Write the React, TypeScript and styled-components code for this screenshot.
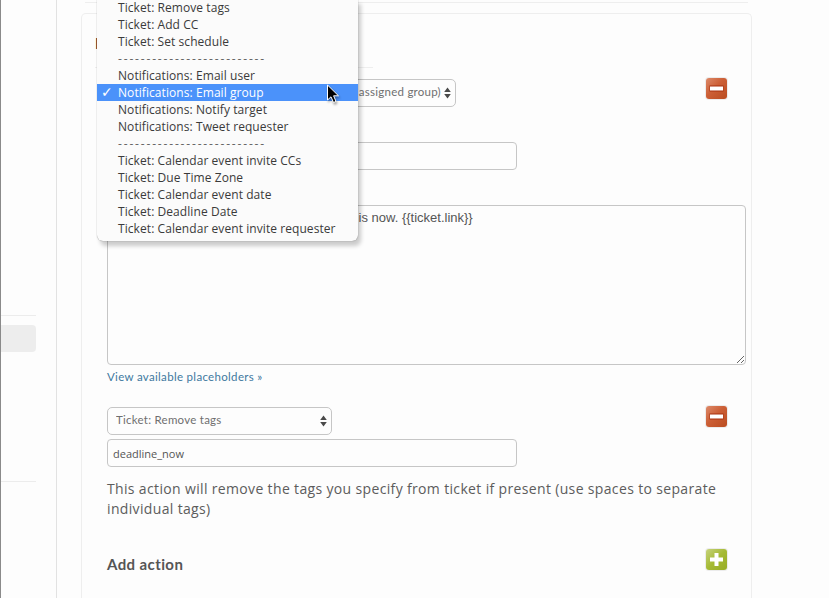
import React from 'react';
import styled, { createGlobalStyle } from 'styled-components';

const GlobalStyle = createGlobalStyle`
    html, body {
        margin: 0;
        padding: 0;
        background: #fdfdfd;
    }
`;

const Page = styled.div`
    position: relative;
    display: flex;
    width: 829px;
    height: 598px;
    overflow: hidden;
    background: #fdfdfd;
    font-family: "Lato", "Liberation Sans", sans-serif;
    color: #555;
`;

const Sidebar = styled.aside`
    box-sizing: border-box;
    flex: 0 0 57px;
    padding-top: 315px;
    border-left: 1px solid #8a8a8a;
    border-right: 1px solid #e2e2e2;
`;

const SideRule = styled.div`
    width: 35px;
    height: 1px;
    background: #ececec;
`;

const SideItem = styled.div`
    width: 35px;
    height: 27px;
    margin: 9px 0 129px;
    border-radius: 0 4px 4px 0;
    background: #ededed;
`;

const Main = styled.main`
    flex: 1;
    padding: 2px 0 0 24px;
`;

const TopRule = styled.div`
    width: 663px;
    height: 1px;
    margin-left: 4px;
    background: #eeeeee;
`;

const Panel = styled.section`
    box-sizing: border-box;
    width: 671px;
    height: 600px;
    margin-top: 10px;
    padding: 0 0 0 13px;
    border: 1px solid #eeeeee;
    border-bottom: 0;
    border-radius: 5px 5px 0 0;
`;

const SectionTitle = styled.h3`
    box-sizing: border-box;
    width: 278px;
    height: 54px;
    margin: 0 0 11px;
    padding-top: 20px;
    border-bottom: 1px solid #eeeeee;
    font-size: 15px;
    line-height: 18px;
    font-weight: 700;
    color: #333;
`;

const Actions = styled.div`
    width: 639px;
    margin-left: 12px;
`;

const SelectRow = styled.div`
    display: flex;
    align-items: flex-start;
    justify-content: space-between;
    padding-right: 19px;
`;

const SelectWrap = styled.div<{ $width: number }>`
    position: relative;
    width: ${(p) => p.$width}px;
    height: 28px;
`;

const Select = styled.select`
    appearance: none;
    box-sizing: border-box;
    display: block;
    width: 100%;
    height: 28px;
    margin: 0;
    padding: 0 12px 4px 8px;
    border: 1px solid #c6c6c6;
    border-radius: 5px;
    background: #fdfdfd;
    font-family: "Lato", "Liberation Sans", sans-serif;
    font-size: 11.5px;
    letter-spacing: 0.25px;
    color: #6f6f6f;
`;

const Arrows = styled.svg`
    position: absolute;
    top: 8px;
    right: 5px;
    width: 7px;
    height: 12px;
`;

const TextInput = styled.input<{ $gap: number }>`
    box-sizing: border-box;
    display: block;
    width: 410px;
    height: 28px;
    margin: ${(p) => p.$gap}px 0 0;
    padding: 0 5px;
    border: 1px solid #c6c6c6;
    border-radius: 4px;
    background: #fdfdfd;
    font-family: "Open Sans", "Liberation Sans", sans-serif;
    font-size: 11px;
    color: #555;
    outline: none;
`;

const MessageBox = styled.textarea`
    box-sizing: border-box;
    display: block;
    width: 639px;
    height: 160px;
    margin: 35px 0 0;
    padding: 4px 7px;
    border: 1px solid #c6c6c6;
    border-radius: 4px;
    background: #fdfdfd;
    font-family: "Liberation Sans", sans-serif;
    font-size: 13px;
    line-height: 16px;
    color: #555;
    outline: none;
`;

const PlaceholderLink = styled.a`
    display: block;
    height: 42px;
    padding-top: 5px;
    box-sizing: border-box;
    font-size: 11.5px;
    line-height: 14px;
    letter-spacing: 0.32px;
    color: #41799f;
    text-decoration: none;
`;

const HelpText = styled.p`
    max-width: 625px;
    margin: 12px 0 0;
    font-family: "Open Sans", sans-serif;
    font-size: 14px;
    line-height: 20px;
    letter-spacing: 0.345px;
    color: #5c5c5c;
`;

const AddRow = styled.div`
    display: flex;
    align-items: flex-start;
    justify-content: space-between;
    margin-top: 31px;
    padding-right: 19px;
`;

const AddTitle = styled.span`
    padding-top: 5px;
    font-size: 15px;
    line-height: 18px;
    font-weight: 700;
    letter-spacing: 0.4px;
    color: #555;
`;

const SquareButton = styled.button<{ $tone: 'remove' | 'add' }>`
    display: flex;
    align-items: center;
    justify-content: center;
    width: 21px;
    height: 21px;
    margin-top: -1px;
    padding: 0;
    border: 0;
    border-radius: 3px;
    box-shadow: 0 0 0 1px #ececec;
    background: ${(p) =>
        p.$tone === 'remove'
            ? 'linear-gradient(135deg, #dd8a6a 0%, #cc5f36 45%, #ba4c20 100%)'
            : 'linear-gradient(135deg, #c6d27c 0%, #a5ba34 50%, #98ac26 100%)'};
`;

const ButtonGlyph = styled.svg`
    display: block;
    width: 15px;
    height: 15px;
`;

const Popup = styled.ul`
    position: absolute;
    top: -1px;
    left: 97px;
    box-sizing: border-box;
    width: 261px;
    height: 242px;
    margin: 0;
    padding: 0;
    list-style: none;
    border-radius: 0 0 6px 6px;
    background: #fbfbfb;
    box-shadow: 0 0 1px rgba(0, 0, 0, 0.5), 3px 5px 4px rgba(0, 0, 0, 0.2);
`;

const PopupItem = styled.li<{ $selected?: boolean; $separator?: boolean }>`
    position: relative;
    height: 17px;
    padding-left: 21px;
    font-family: "Open Sans", "Liberation Sans", sans-serif;
    font-size: 12px;
    line-height: 17px;
    white-space: nowrap;
    letter-spacing: ${(p) => (p.$separator ? '1.83px' : '0.07px')};
    color: ${(p) => (p.$selected ? '#ffffff' : p.$separator ? '#666' : '#3a3a3a')};
    background: ${(p) => (p.$selected ? '#4b92fa' : 'transparent')};
`;

const Check = styled.span`
    position: absolute;
    left: 4px;
    top: 0;
    font-family: "DejaVu Sans", sans-serif;
    font-size: 14px;
    font-weight: 700;
`;

const Pointer = styled.svg`
    position: absolute;
    top: 84px;
    left: 326px;
    width: 15px;
    height: 20px;
    filter: drop-shadow(1px 2px 1px rgba(0, 0, 0, 0.35));
`;

const SEPARATOR = '--------------------------';
const SELECTED = 'Notifications: Email group';

const menuItems = [
    'Ticket: Remove tags',
    'Ticket: Add CC',
    'Ticket: Set schedule',
    SEPARATOR,
    'Notifications: Email user',
    SELECTED,
    'Notifications: Notify target',
    'Notifications: Tweet requester',
    SEPARATOR,
    'Ticket: Calendar event invite CCs',
    'Ticket: Due Time Zone',
    'Ticket: Calendar event date',
    'Ticket: Deadline Date',
    'Ticket: Calendar event invite requester',
];

const SelectArrows = () => (
    <Arrows viewBox="0 0 7 12">
        <path d="M3.5 0.5 L6.8 5 H0.2 Z M3.5 11.5 L0.2 7 H6.8 Z" fill="#4a4a4a" />
    </Arrows>
);

const Minus = () => (
    <ButtonGlyph viewBox="0 0 15 15">
        <rect x="0.5" y="4.5" width="14" height="6" fill="#a8300f" />
        <rect x="1" y="5.5" width="13" height="4" fill="#ffffff" />
    </ButtonGlyph>
);

const Plus = () => (
    <ButtonGlyph viewBox="0 0 15 15">
        <path d="M5.5 1 H9.5 V5.5 H14 V9.5 H9.5 V14 H5.5 V9.5 H1 V5.5 H5.5 Z" fill="#ffffff" />
    </ButtonGlyph>
);

const App: React.FunctionComponent = () => (
    <Page>
        <GlobalStyle />
        <Sidebar>
            <SideRule />
            <SideItem />
            <SideRule />
        </Sidebar>
        <Main>
            <TopRule />
            <Panel>
                <SectionTitle>Perform these actions:</SectionTitle>
                <Actions>
                    <SelectRow>
                        <SelectWrap $width={349}>
                            <Select defaultValue="group">
                                <option value="group">Notifications: Email group (all of the agents in assigned group)</option>
                            </Select>
                            <SelectArrows />
                        </SelectWrap>
                        <SquareButton $tone="remove" type="button" aria-label="Remove action"><Minus /></SquareButton>
                    </SelectRow>
                    <TextInput readOnly value="" $gap={35} />
                    <MessageBox readOnly value="The deadline for this ticket you worked on is now. {{ticket.link}}" />
                    <PlaceholderLink href="#">View available placeholders »</PlaceholderLink>

                    <SelectRow>
                        <SelectWrap $width={225}>
                            <Select defaultValue="remove">
                                <option value="remove">Ticket: Remove tags</option>
                            </Select>
                            <SelectArrows />
                        </SelectWrap>
                        <SquareButton $tone="remove" type="button" aria-label="Remove action"><Minus /></SquareButton>
                    </SelectRow>
                    <TextInput readOnly value="deadline_now" $gap={4} />
                    <HelpText>
                        This action will remove the tags you specify from ticket if present (use spaces to separate individual tags)
                    </HelpText>

                    <AddRow>
                        <AddTitle>Add action</AddTitle>
                        <SquareButton $tone="add" type="button" aria-label="Add action"><Plus /></SquareButton>
                    </AddRow>
                </Actions>
            </Panel>
        </Main>
        <Popup>
            {menuItems.map((item, i) => (
                <PopupItem key={i} $selected={item === SELECTED} $separator={item === SEPARATOR}>
                    {item === SELECTED && <Check>✓</Check>}
                    {item}
                </PopupItem>
            ))}
        </Popup>
        <Pointer viewBox="0 0 15 20">
            <path d="M1.5 1 L1.5 16 L5 12.8 L7.5 18.5 L10 17.4 L7.6 11.8 L12.5 11.8 Z" fill="#000" stroke="#fff" strokeWidth="1" />
        </Pointer>
    </Page>
);

export default App;
